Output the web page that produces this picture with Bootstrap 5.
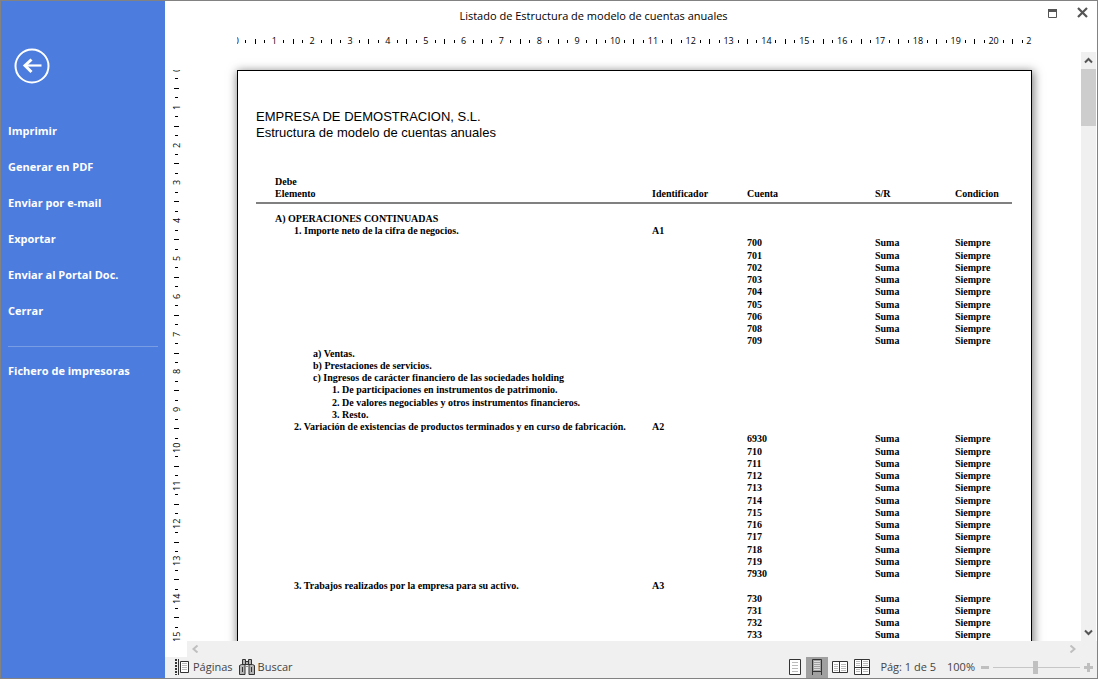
<!DOCTYPE html>
<html lang="es">
<head>
<meta charset="utf-8">
<meta name="viewport" content="width=device-width, initial-scale=1">
<title>Listado de Estructura de modelo de cuentas anuales</title>
<link href="https://cdn.jsdelivr.net/npm/bootstrap@5.3.0/dist/css/bootstrap.min.css" rel="stylesheet">
<style>
  body { font: 11px/16px "Open Sans", "Noto Sans", sans-serif; color: #000; }
  .app { border: 1px solid #828282; }
  button { font: inherit; color: inherit; background: none; border: 0; padding: 0; }
  svg { display: block; }

  .side { width: 164px; background: #4c7cdd; color: #fff; padding: 47px 7px 0; }
  .side .back { margin: 0 0 29px 6px; }
  .side a { color: #fff; font-weight: 700; line-height: 20px; padding: 8px 0; text-decoration: none; }
  .side hr { border-color: #fff; margin: 17px 0 6px; }

  .titlebar { height: 30px; padding-right: 75px; }
  .titlebar .tools { gap: 16px; top: 5px; right: 8px; }

  .sheet-w { width: 795px; }
  .hbar { height: 21px; padding: 1px 16px 0 23px; }
  .vbar { width: 23px; padding-top: 18px; }
  .ruler { font-size: 9px; line-height: 18px; }
  .ruler-cell { flex: 1 1 0; display: grid; }
  .ruler-cell i { background: #000; }
  .ruler-h { height: 18px; }
  .ruler-h .strip { display: flex; height: 18px; margin: 0 -18px 0 -20px; }
  .ruler-h .ruler-cell { grid-template-columns: repeat(4, 1fr); align-items: center; }
  .ruler-h i { width: 1px; height: 3px; }
  .ruler-h i.tall { height: 5px; }
  .ruler-h span { width: 1px; display: flex; justify-content: center; }
  .ruler-v { height: 100%; }
  .ruler-v .strip { display: flex; flex-direction: column; margin-top: -20px; height: 605px; }
  .ruler-v .ruler-cell { grid-template-rows: repeat(4, 1fr); justify-items: center; }
  .ruler-v i { height: 1px; width: 3px; }
  .ruler-v i.tall { width: 5px; }
  .ruler-v span { height: 1px; display: flex; justify-content: center; writing-mode: vertical-rl; transform: rotate(180deg); }

  .view { padding-top: 18px; }
  .sheet { border: 1px solid #000; background: #fff; box-shadow: 1px 2px 9px 1px rgba(0,0,0,.5); padding: 38px 19px 40px 18px; min-height: 1123px; }
  .sheet h1, .sheet h2 { font: 13px/16px "Liberation Sans", sans-serif; margin: 0; }
  .report { width: 100%; margin-top: 35px; table-layout: fixed; font: 700 10px/12px "Liberation Serif", serif; border-collapse: separate; border-spacing: 0; }
  .report th, .report td { padding: 0; height: 12px; vertical-align: bottom; white-space: nowrap; }
  .report thead th { border-bottom: 2px solid #808080; padding-bottom: 2px; }
  .report tbody::before { content: ""; display: table-row; height: 9px; }
  .report tbody tr:nth-child(4n) td { height: 13px; }
  .report .l0 { padding-left: 19px; }
  .report .l1 { padding-left: 38px; }
  .report .l2 { padding-left: 57px; }
  .report .l3 { padding-left: 76px; }

  .scroll-v { width: 16px; background: #f0f0f0; border-right: 1px solid #fff; }
  .scroll-v button { height: 17px; }
  .scroll-v .thumb { height: 57px; background: #cdcdcd; }
  .scroll-h { height: 16px; background: #f0f0f0; margin-left: 22px; padding: 0 20px 0 4px; }

  .status { height: 21px; background: #f0f0f0; color: #444; padding: 0 4px 1px 10px; }
  .status .modes { gap: 1px; }
  .status .modes button { height: 21px; width: 21px; display: flex; align-items: center; justify-content: center; }
  .status .modes button.on { background: #a0a0a0; width: 22px; }
  .status .search { margin-left: 6px; gap: 3px; }
  .status .page-no { padding-left: 8px; }
  .status .zoom-pct { margin-left: 11px; margin-right: 6px; }
  .zoomer { appearance: none; width: 87px; height: 14px; margin: 0; background: linear-gradient(#c6c6c6, #c6c6c6) center / 100% 1px no-repeat; }
  .zoomer::-webkit-slider-thumb { appearance: none; width: 5px; height: 13px; background: #c0c0c0; border: 0; }
</style>
</head>
<body>
<div class="app d-flex vh-100 overflow-hidden">
  <nav class="side d-flex flex-column flex-shrink-0">
    <button class="back align-self-start" aria-label="Volver">
      <svg width="36" height="36" viewBox="0 0 36 36" fill="none" stroke="#fff" stroke-width="2"><circle cx="18" cy="18" r="16.5"/><path d="M11 17.500H27.500" stroke-width="2.200"/><path d="M17.500 11.500L11 17.500L17.500 24" stroke-width="3"/></svg>
    </button>
    <a href="#">Imprimir</a>
    <a href="#">Generar en PDF</a>
    <a href="#">Enviar por e-mail</a>
    <a href="#">Exportar</a>
    <a href="#">Enviar al Portal Doc.</a>
    <a href="#">Cerrar</a>
    <hr>
    <a href="#">Fichero de impresoras</a>
  </nav>

  <main class="d-flex flex-column flex-grow-1 overflow-hidden">
    <header class="titlebar position-relative d-flex align-items-center justify-content-center flex-shrink-0">
      <span>Listado de Estructura de modelo de cuentas anuales</span>
      <div class="tools position-absolute d-flex">
        <button aria-label="Maximizar"><svg width="12" height="14" viewBox="0 0 12 14"><path d="M1.500 3.500h8v8h-8z" fill="none" stroke="#555"/><path d="M1 3h9v3h-9z" fill="#555"/></svg></button>
        <button aria-label="Cerrar ventana"><svg width="14" height="14" viewBox="0 0 14 14"><path d="M3 2l9 9M12 2l-9 9" stroke="#555" stroke-width="2.200"/></svg></button>
      </div>
    </header>

    <div class="hbar d-flex justify-content-center flex-shrink-0">
      <div class="ruler ruler-h sheet-w flex-shrink-0 overflow-hidden"><div class="strip" id="rh"></div></div>
    </div>

    <div class="d-flex flex-grow-1 overflow-hidden">
      <div class="vbar flex-shrink-0 overflow-hidden"><div class="ruler ruler-v overflow-hidden"><div class="strip" id="rv"></div></div></div>
      <div class="view d-flex justify-content-center align-items-start flex-grow-1 overflow-hidden">
        <article class="sheet sheet-w flex-shrink-0">
          <h1>EMPRESA DE DEMOSTRACION, S.L.</h1>
          <h2>Estructura de modelo de cuentas anuales</h2>
          <table class="report">
            <colgroup><col style="width:396px"><col style="width:95px"><col style="width:128px"><col style="width:80px"><col></colgroup>
            <thead><tr><th class="l0">Debe<br>Elemento</th><th>Identificador</th><th>Cuenta</th><th>S/R</th><th>Condicion</th></tr></thead>
            <tbody id="rows"></tbody>
          </table>
        </article>
      </div>
      <div class="scroll-v d-flex flex-column flex-shrink-0">
        <button class="d-flex align-items-center justify-content-center" aria-label="Subir"><svg width="9" height="7" viewBox="0 0 9 7"><path d="M1 5.500L4.500 2L8 5.500" fill="none" stroke="#555" stroke-width="2"/></svg></button>
        <div class="thumb"></div>
        <button class="d-flex align-items-center justify-content-center mt-auto" aria-label="Bajar"><svg width="9" height="7" viewBox="0 0 9 7"><path d="M1 1.500L4.500 5L8 1.500" fill="none" stroke="#555" stroke-width="2"/></svg></button>
      </div>
    </div>

    <div class="scroll-h d-flex align-items-center justify-content-between flex-shrink-0">
      <button aria-label="Izquierda"><svg width="8" height="8" viewBox="0 0 8 8"><path d="M6.500 .5L2.500 4L6.500 7.500" fill="none" stroke="#bfbfbf" stroke-width="2"/></svg></button>
      <button aria-label="Derecha"><svg width="8" height="8" viewBox="0 0 8 8"><path d="M1.500 .5L5.500 4L1.500 7.500" fill="none" stroke="#bfbfbf" stroke-width="2"/></svg></button>
    </div>

    <footer class="status d-flex align-items-center flex-shrink-0">
      <button class="d-flex align-items-center gap-1">
        <svg width="14" height="16" viewBox="0 0 14 16"><path d="M1 0v16" stroke="#333" stroke-width="2" stroke-dasharray="2 1"/><path d="M3.500 0v16" stroke="#333"/><path d="M5.500 2.500h8v11h-8z" fill="#fff" stroke="#333"/><path d="M7 4.500h5M7 6.500h5M7 8.500h5M7 10.500h5" stroke="#bbb"/></svg>
        Páginas</button>
      <button class="search d-flex align-items-center">
        <svg width="16" height="16" viewBox="0 0 16 16" fill="#b4b4b4" stroke="#333"><path d="M3.500 .5h3v5h-3zM9.500 .5h3v5h-3zM6.500 2.500h3v3h-3z"/><path d="M.5 6.500l2-1h3.500v10h-5.500zM15.500 6.500l-2-1h-3.500v10h5.500z"/><path d="M3.500 8v5M12.500 8v5M8 7v1"/></svg>
        Buscar</button>
      <div class="modes d-flex ms-auto">
        <button aria-label="Una página"><svg width="12" height="16" viewBox="0 0 12 16"><path d="M.5 .5h11v15H.5z" fill="#fff" stroke="#333"/><path d="M3 3.500h6M3 6.500h6M3 9.500h6M3 12.500h6" stroke="#bbb"/></svg></button>
        <button class="on" aria-label="Ancho de página"><svg width="12" height="16" viewBox="0 0 12 16" fill="none" stroke="#333"><path d="M1.500 0.500h9v12h-9zM1.500 12v4M10.500 12v4"/><path d="M3 2.500h6M3 4.500h6M3 6.500h6M3 8.500h6M3 10.500h6" stroke="#ddd"/></svg></button>
        <button aria-label="Dos páginas"><svg width="16" height="12" viewBox="0 0 16 12"><path d="M.5 .5h15v11H.5zM7.500 .5v11" fill="#fff" stroke="#333"/><path d="M2 3.500h4M2 5.500h4M2 7.500h4M2 9.500h4M9 3.500h5M9 5.500h5M9 7.500h5M9 9.500h5" stroke="#bbb"/></svg></button>
        <button aria-label="Cuatro páginas"><svg width="16" height="16" viewBox="0 0 16 16"><path d="M.5 .5h15v15H.5z" fill="#fff"/><path d="M2 2.500h4M2 4.500h4M2 6.500h4M2 10.500h4M2 12.500h4M9 2.500h5M9 4.500h5M9 6.500h5M9 10.500h5M9 12.500h5" stroke="#bbb"/><path d="M.5 .5h15v15H.5zM7.500 .5v15M.5 8.500h15" fill="none" stroke="#333"/></svg></button>
      </div>
      <span class="page-no">Pág: 1 de 5</span>
      <label class="zoom-pct" for="zoom">100%</label>
      <button aria-label="Alejar"><svg width="8" height="9" viewBox="0 0 8 9"><path d="M0 4.500h8" stroke="#bfbfbf" stroke-width="3"/></svg></button>
      <input class="zoomer ms-1" id="zoom" type="range" min="0" max="100" value="49">
      <button class="ms-1" aria-label="Acercar"><svg width="9" height="9" viewBox="0 0 9 9"><path d="M0 4.500h9M4.500 0v9" stroke="#bfbfbf" stroke-width="3"/></svg></button>
    </footer>
  </main>
</div>

<script src="https://cdn.jsdelivr.net/npm/bootstrap@5.3.0/dist/js/bootstrap.bundle.min.js"></script>
<script>
  // Centimetre rulers: every cell is centred on its number
  const cells = n => Array.from({ length: n }, (_, k) =>
    `<div class="ruler-cell"><i class="tall"></i><i></i><span>${k}</span><i></i></div>`).join('');
  document.getElementById('rh').innerHTML = cells(22);
  document.getElementById('rv').innerHTML = cells(16);

  // Report lines: [level, text, identifier] for an element, a number for an account
  const lines = [
    [0, 'A) OPERACIONES CONTINUADAS', ''],
    [1, '1. Importe neto de la cifra de negocios.', 'A1'],
    700, 701, 702, 703, 704, 705, 706, 708, 709,
    [2, 'a) Ventas.', ''],
    [2, 'b) Prestaciones de servicios.', ''],
    [2, 'c) Ingresos de carácter financiero de las sociedades holding', ''],
    [3, '1. De participaciones en instrumentos de patrimonio.', ''],
    [3, '2. De valores negociables y otros instrumentos financieros.', ''],
    [3, '3. Resto.', ''],
    [1, '2. Variación de existencias de productos terminados y en curso de fabricación.', 'A2'],
    6930, 710, 711, 712, 713, 714, 715, 716, 717, 718, 719, 7930,
    [1, '3. Trabajos realizados por la empresa para su activo.', 'A3'],
    730, 731, 732, 733
  ];
  document.getElementById('rows').innerHTML = lines.map(r => Array.isArray(r)
    ? `<tr><td class="l${r[0]}">${r[1]}</td><td>${r[2]}</td><td></td><td></td><td></td></tr>`
    : `<tr><td></td><td></td><td>${r}</td><td>Suma</td><td>Siempre</td></tr>`).join('');
</script>
</body>
</html>
